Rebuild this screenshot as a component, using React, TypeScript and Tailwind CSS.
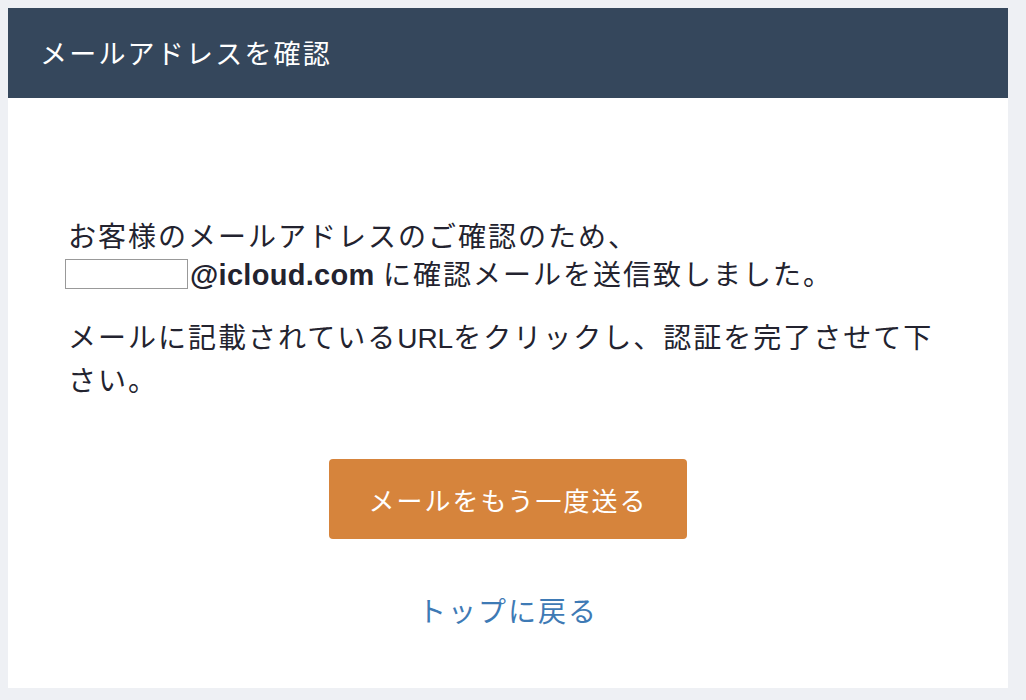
export default function App() {
  return (
    <div
      className="min-h-[700px] bg-[#eef0f4] p-2"
      style={{ fontFamily: '"Noto Sans CJK JP", "Noto Sans", sans-serif' }}
    >
      <div className="w-[1000px] bg-white">
        <div className="flex h-[90px] items-center bg-[#35475c] px-8">
          <h1 className="text-[27px] font-normal tracking-[2.2px] text-white">メールアドレスを確認</h1>
        </div>
        <div className="flex h-[590px] flex-col px-[60px] pt-[118px]">
          <p className="text-[28px] leading-[38px] tracking-[2px] text-[#23232f]">
            お客様のメールアドレスのご確認のため、
            <br />
            <span className="inline-block h-[30px] w-[123px] -ml-[3px] align-[-4px] border border-[#999] bg-white" />
            <span
              className="ml-[2px] text-[29px] font-bold tracking-[0.3px]"
              style={{ fontFamily: '"Liberation Sans", Arial, sans-serif' }}
            >
              @icloud.com
            </span>{" "}
            に確認メールを送信致しました。
          </p>
          <p className="mt-[22px] text-[28px] leading-[40px] tracking-[2px] text-[#23232f]">
            メールに記載されている
            <span style={{ fontFamily: '"Liberation Sans", Arial, sans-serif' }} className="tracking-normal">
              URL
            </span>
            をクリックし、認証を完了させて下さい。
          </p>
          <div className="mt-[60px] flex justify-center">
            <button className="h-[80px] w-[358px] rounded-[4px] bg-[#d6843c] text-[26px] tracking-[2px] text-white">
              メールをもう一度送る
            </button>
          </div>
          <div className="mt-[50px] flex justify-center">
            <a href="#" className="text-[28px] tracking-[2px] text-[#3e7ab5]">
              トップに戻る
            </a>
          </div>
        </div>
      </div>
    </div>
  );
}
